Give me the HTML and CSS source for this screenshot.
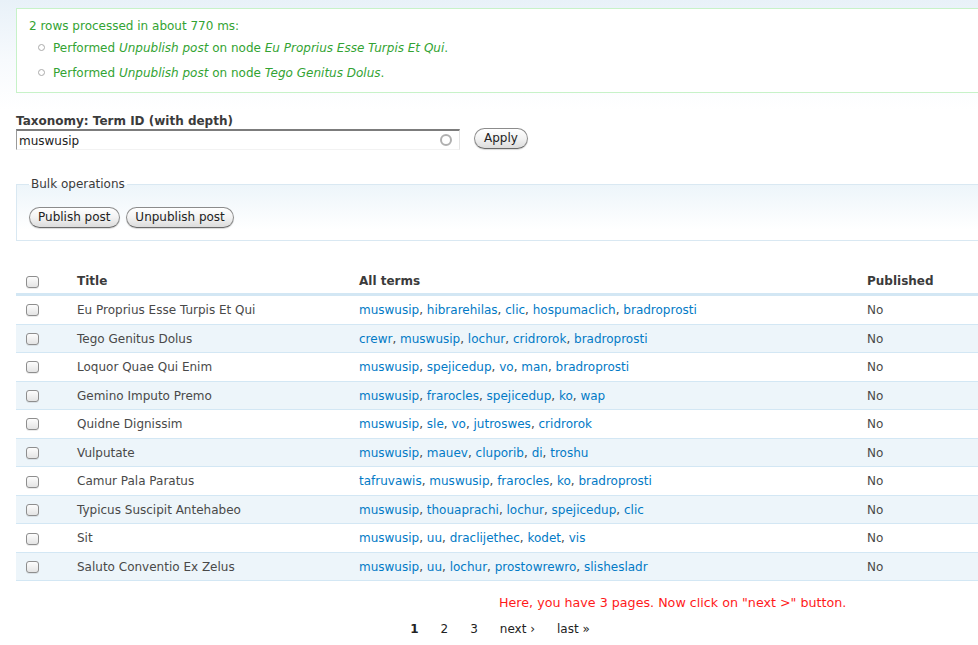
FILE: index.html
```html
<!DOCTYPE html>
<html>
<head>
<meta charset="UTF-8">
<title>Content</title>
<link rel="stylesheet" href="styles.css">
</head>
<body>
<div id="page">
	<div class="messages status">
		2 rows processed in about 770 ms:
		<ul>
			<li>Performed <em>Unpublish post</em> on node <em>Eu Proprius Esse Turpis Et Qui</em>.</li>
			<li>Performed <em>Unpublish post</em> on node <em>Tego Genitus Dolus</em>.</li>
		</ul>
	</div>

	<div class="filter">
		<label for="edit-tid">Taxonomy: Term ID (with depth)</label>
		<div class="filter-row">
			<div class="autocomplete">
				<input type="text" id="edit-tid" value="muswusip">
				<span class="throbber"></span>
			</div>
			<button class="form-submit">Apply</button>
		</div>
	</div>

	<fieldset class="bulk">
		<legend>Bulk operations</legend>
		<button class="form-submit">Publish post</button>
		<button class="form-submit">Unpublish post</button>
	</fieldset>

	<table class="views-table">
		<colgroup>
			<col class="c-check"><col class="c-title"><col class="c-terms"><col class="c-pub">
		</colgroup>
		<thead>
			<tr>
				<th class="check"><input type="checkbox"></th>
				<th>Title</th>
				<th>All terms</th>
				<th>Published</th>
			</tr>
		</thead>
		<tbody>
			<tr class="odd">
				<td class="check"><input type="checkbox"></td>
				<td>Eu Proprius Esse Turpis Et Qui</td>
				<td><a href="#">muswusip</a>, <a href="#">hibrarehilas</a>, <a href="#">clic</a>, <a href="#">hospumaclich</a>, <a href="#">bradroprosti</a></td>
				<td>No</td>
			</tr>
			<tr class="even">
				<td class="check"><input type="checkbox"></td>
				<td>Tego Genitus Dolus</td>
				<td><a href="#">crewr</a>, <a href="#">muswusip</a>, <a href="#">lochur</a>, <a href="#">cridrorok</a>, <a href="#">bradroprosti</a></td>
				<td>No</td>
			</tr>
			<tr class="odd">
				<td class="check"><input type="checkbox"></td>
				<td>Loquor Quae Qui Enim</td>
				<td><a href="#">muswusip</a>, <a href="#">spejicedup</a>, <a href="#">vo</a>, <a href="#">man</a>, <a href="#">bradroprosti</a></td>
				<td>No</td>
			</tr>
			<tr class="even">
				<td class="check"><input type="checkbox"></td>
				<td>Gemino Imputo Premo</td>
				<td><a href="#">muswusip</a>, <a href="#">frarocles</a>, <a href="#">spejicedup</a>, <a href="#">ko</a>, <a href="#">wap</a></td>
				<td>No</td>
			</tr>
			<tr class="odd">
				<td class="check"><input type="checkbox"></td>
				<td>Quidne Dignissim</td>
				<td><a href="#">muswusip</a>, <a href="#">sle</a>, <a href="#">vo</a>, <a href="#">jutroswes</a>, <a href="#">cridrorok</a></td>
				<td>No</td>
			</tr>
			<tr class="even">
				<td class="check"><input type="checkbox"></td>
				<td>Vulputate</td>
				<td><a href="#">muswusip</a>, <a href="#">mauev</a>, <a href="#">cluporib</a>, <a href="#">di</a>, <a href="#">troshu</a></td>
				<td>No</td>
			</tr>
			<tr class="odd">
				<td class="check"><input type="checkbox"></td>
				<td>Camur Pala Paratus</td>
				<td><a href="#">tafruvawis</a>, <a href="#">muswusip</a>, <a href="#">frarocles</a>, <a href="#">ko</a>, <a href="#">bradroprosti</a></td>
				<td>No</td>
			</tr>
			<tr class="even">
				<td class="check"><input type="checkbox"></td>
				<td>Typicus Suscipit Antehabeo</td>
				<td><a href="#">muswusip</a>, <a href="#">thouaprachi</a>, <a href="#">lochur</a>, <a href="#">spejicedup</a>, <a href="#">clic</a></td>
				<td>No</td>
			</tr>
			<tr class="odd">
				<td class="check"><input type="checkbox"></td>
				<td>Sit</td>
				<td><a href="#">muswusip</a>, <a href="#">uu</a>, <a href="#">draclijethec</a>, <a href="#">kodet</a>, <a href="#">vis</a></td>
				<td>No</td>
			</tr>
			<tr class="even">
				<td class="check"><input type="checkbox"></td>
				<td>Saluto Conventio Ex Zelus</td>
				<td><a href="#">muswusip</a>, <a href="#">uu</a>, <a href="#">lochur</a>, <a href="#">prostowrewro</a>, <a href="#">slishesladr</a></td>
				<td>No</td>
			</tr>
		</tbody>
	</table>

	<div class="hint">Here, you have 3 pages. Now click on "next &gt;" button.</div>

	<ul class="pager">
		<li class="pager-current">1</li>
		<li><a href="#">2</a></li>
		<li><a href="#">3</a></li>
		<li><a href="#">next ›</a></li>
		<li><a href="#">last »</a></li>
	</ul>
</div>
</body>
</html>
```

FILE: styles.css
```css
html {
	overflow: hidden;
	background: #fff;
}
body {
	margin: 0;
	background: #fff linear-gradient(#e8f1f8 0px, #f7fafd 60px, #fff 110px) no-repeat;
	color: #494949;
	font-family: "DejaVu Sans", Verdana, sans-serif;
	font-size: 12px;
	line-height: 17px;
}
#page {
	width: 968px;
	padding: 8px 0 0 16px;
}
a {
	color: #027ac6;
	text-decoration: none;
}

/* status message */
.messages {
	background: #fff;
	border: 1px solid #c7f2c8;
	color: #33a333;
	padding: 9px 12px 10px;
}
.messages ul {
	list-style: none;
	margin: 5px 0 0;
	padding: 0 0 0 24px;
}
.messages li {
	position: relative;
	margin-bottom: 8px;
}
.messages li:last-child {
	margin-bottom: 0;
}
.messages li::before {
	content: '';
	position: absolute;
	left: -15px;
	top: 4px;
	width: 5px;
	height: 5px;
	border: 1px solid #aaa;
	border-radius: 50%;
}

/* exposed filter */
.filter {
	margin-top: 20px;
}
.filter label {
	display: block;
	font-weight: bold;
	color: #3b3b3b;
}
.filter-row {
	display: flex;
	align-items: flex-start;
}
.autocomplete {
	position: relative;
}
.autocomplete input {
	box-sizing: border-box;
	width: 444px;
	height: 21px;
	margin: -1px 0 0;
	padding: 1px 2px 0;
	border-style: solid;
	border-width: 2px 1px 1px 1px;
	border-color: #7c7c7c #e4e4e4 #f2f2f2 #9a9a9a;
	font-family: "DejaVu Sans", Verdana, sans-serif;
	font-size: 12px;
	color: #222;
	background: #fff;
}
.throbber {
	position: absolute;
	right: 8px;
	top: 4px;
	width: 8px;
	height: 8px;
	border: 2px solid #b0b0b0;
	border-radius: 50%;
}
.form-submit {
	height: 21px;
	margin: 0;
	padding: 0 8px;
	border: 1px solid #8c8c8c;
	border-bottom-color: #6a6a6a;
	border-radius: 11px;
	background: linear-gradient(#fff, #f2f2f2 50%, #dcdcdc);
	box-shadow: 0 1px 1px rgba(0,0,0,0.15);
	color: #222;
	font-family: "DejaVu Sans", Verdana, sans-serif;
	font-size: 12px;
	line-height: 19px;
}
.filter-row .form-submit {
	margin: -2px 0 0 14px;
	padding: 0 9px;
}

/* bulk operations */
.bulk {
	margin: 26px 0 0;
	padding: 14px 12px 12px;
	border: 1px solid #d9e8f2;
	background: linear-gradient(#edf5fa, #fff 45px);
}
.bulk legend {
	padding: 0 2px;
	color: #3b3b3b;
}
.bulk .form-submit {
	margin-right: 3px;
}

/* result table */
.views-table {
	width: 968px;
	margin-top: 26px;
	border-collapse: collapse;
	table-layout: fixed;
}
.c-check { width: 53px; }
.c-title { width: 282px; }
.c-terms { width: 508px; }
.views-table th {
	text-align: left;
	font-weight: bold;
	color: #3b3b3b;
	padding: 6px 8px 3px;
	border-bottom: 3px solid #d3e7f4;
}
.views-table td {
	padding: 5px 8px 4px;
	line-height: 18.55px;
}
.views-table tbody tr {
	border-bottom: 1px solid #d3e7f4;
}
.views-table tr.even {
	background: #edf5fa;
}
.views-table .check {
	padding-left: 10px;
	padding-right: 0;
}
input[type=checkbox] {
	appearance: none;
	display: block;
	box-sizing: border-box;
	width: 13px;
	height: 12px;
	margin: 0;
	border: 1px solid #8e8e8e;
	border-radius: 3px;
	background: linear-gradient(#fdfdfd, #e4e4e4);
	box-shadow: 0 1px 0 rgba(0,0,0,0.08);
}

/* pager */
.hint {
	color: #ff1a1a;
	font-size: 12.7px;
	margin: 13px 0 0 483px;
}
.pager {
	list-style: none;
	display: flex;
	justify-content: center;
	margin: 10px 0 0;
	padding: 0;
	color: #222;
}
.pager li {
	padding: 0 11px;
}
.pager a {
	color: #222;
}
.pager-current {
	font-weight: bold;
}
```
